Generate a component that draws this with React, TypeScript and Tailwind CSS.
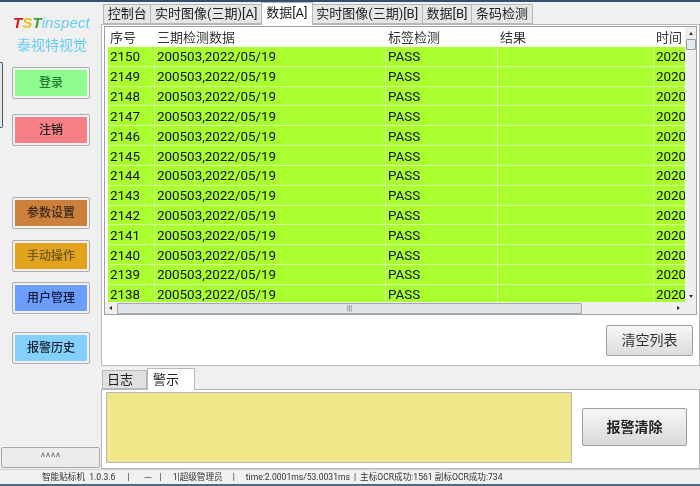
import React from 'react';

const ROWS = [2150, 2149, 2148, 2147, 2146, 2145, 2144, 2143, 2142, 2141, 2140, 2139, 2138];
const TOP_TABS = ['控制台', '实时图像(三期)[A]', '数据[A]', '实时图像(三期)[B]', '数据[B]', '条码检测'];

const FONT = "font-['Roboto','Noto_Sans_CJK_SC',sans-serif]";

function SideButton({ label, bg, text, className }: { label: string; bg: string; text: string; className: string }) {
  return (
    <button className={`h-[32px] w-[78px] ml-[12px] rounded-[2px] border border-[#a9b0b8] p-[2px] bg-[#f0f0f0] ${className}`}>
      <span className={`flex h-full w-full items-center justify-center pb-[1px] text-[12px] font-medium ${bg} ${text}`}>{label}</span>
    </button>
  );
}

function Sidebar() {
  return (
    <div className="relative flex w-[101px] shrink-0 flex-col bg-[#f0f0f0]">
      <div className="absolute left-0 top-[60px] h-[66px] w-[3px] rounded-r-[2px] border-y border-r border-[#555] bg-[#dfe6ee]" />
      <div className="mt-[12px] h-[18px] pl-[13px] text-[15px] leading-[18px] italic font-['Liberation_Sans',sans-serif] tracking-[0.1px]">
        <span className="font-bold text-[#d01818]">T</span>
        <span className="font-bold text-[#e8c020]">S</span>
        <span className="font-bold text-[#3aa040]">T</span>
        <span className="text-[#66ccf5]">inspect</span>
      </div>
      <div className="mt-[4px] pl-[17px] text-[14px] leading-[18px] text-[#66ccf5]">泰视特视觉</div>
      <SideButton label="登录" bg="bg-[#8ffb8f]" text="text-[#1f7a2a]" className="mt-[13px]" />
      <SideButton label="注销" bg="bg-[#f77f86]" text="text-[#222]" className="mt-[15px]" />
      <SideButton label="参数设置" bg="bg-[#cd7f3c]" text="text-[#3a2a1a]" className="mt-[51px]" />
      <SideButton label="手动操作" bg="bg-[#e2a41c]" text="text-[#6e5418]" className="mt-[11px]" />
      <SideButton label="用户管理" bg="bg-[#6b9eff]" text="text-[#111a33]" className="mt-[10px]" />
      <SideButton label="报警历史" bg="bg-[#84d0fd]" text="text-[#1a2230]" className="mt-[18px]" />
      <div className="mt-auto mb-[1px] ml-[1px] flex h-[21px] w-[99px] items-center justify-center rounded-[2px] border border-[#a8a8a8] bg-[#ececec] text-[12px] text-[#777]">
        ^^^^
      </div>
    </div>
  );
}

function TopTabs() {
  return (
    <div className="flex h-[20px] items-end pl-[3px] text-[13px] text-[#222]">
      {TOP_TABS.map((t, i) =>
        i === 2 ? (
          <div key={t} className="relative z-10 -mb-px -ml-px flex h-[23px] items-center border border-b-0 border-[#b8b8b8] bg-white px-[4px] pb-[2px]">
            {t}
          </div>
        ) : (
          <div key={t} className="-ml-px flex h-[20px] items-center border border-[#b8b8b8] bg-[#e6e6e6] px-[3.7px]">
            {t}
          </div>
        ),
      )}
    </div>
  );
}

function DataTable() {
  return (
    <div className="mx-[2px] mt-[1px] flex h-[289px] flex-col overflow-hidden border border-[#a0a0a0] bg-white">
      <div className="flex min-h-0 flex-1">
        <div className="min-w-0 flex-1 overflow-hidden pl-[3px]">
          <div className="flex h-[20px] items-center pt-[1px] text-[13px] text-[#333]">
            <span className="w-[47px] pl-[2px]">序号</span>
            <span className="w-[231px] pl-[2px]">三期检测数据</span>
            <span className="w-[112px] pl-[2px]">标签检测</span>
            <span className="w-[156px] pl-[2px]">结果</span>
            <span className="pl-[2px]">时间</span>
          </div>
          {ROWS.map(id => (
            <div key={id} className="flex h-[19.83px] items-center border-b border-[#d8f79a] bg-[#aaff2e] pt-[2px] text-[13.4px] text-[#111]">
              <span className="-mt-[2px] flex h-[19px] w-[47px] shrink-0 items-center border-r border-[#d8f79a] pl-[2px] pt-[2px]">{id}</span>
              <span className="-mt-[2px] flex h-[19px] w-[231px] shrink-0 items-center border-r border-[#d8f79a] pl-[2px] pt-[2px]">200503,2022/05/19</span>
              <span className="-mt-[2px] flex h-[19px] w-[112px] shrink-0 items-center border-r border-[#d8f79a] pl-[2px] pt-[2px]">PASS</span>
              <span className="-mt-[2px] flex h-[19px] w-[156px] shrink-0 items-center border-r border-[#d8f79a] pl-[2px] pt-[2px]">&nbsp;</span>
              <span className="-mt-[2px] flex h-[19px] shrink-0 items-center pl-[2px] pt-[2px]">2020</span>
            </div>
          ))}
        </div>
        <div className="flex w-[11px] shrink-0 flex-col items-center bg-[#efefef]">
          <span className="mt-[5px] h-0 w-0 border-x-[2px] border-b-[3px] border-x-transparent border-b-[#333]" />
          <span className="mt-[4px] h-[11px] w-[10px] rounded-[1px] border border-[#9a9a9a] bg-[#e4eaf0]" />
          <span className="mb-[4px] mt-auto h-0 w-0 border-x-[2px] border-t-[3px] border-x-transparent border-t-[#333]" />
        </div>
      </div>
      <div className="flex h-[12px] shrink-0 items-center bg-[#efefef] pl-[4px]">
        <span className="h-0 w-0 border-y-[2px] border-r-[3px] border-y-transparent border-r-[#333]" />
        <span className="ml-[5px] flex h-[11px] w-[465px] items-center justify-center rounded-[1px] border border-[#a8a8a8] bg-[#dfe4e9] text-[7px] leading-none text-[#666]">
          |||
        </span>
        <span className="ml-auto mr-[5px] h-0 w-0 border-y-[2px] border-l-[3px] border-y-transparent border-l-[#333]" />
        <span className="w-[11px]" />
      </div>
    </div>
  );
}

function BottomPanel() {
  return (
    <>
      <div className="mt-[2px] flex h-[21px] items-end pl-[1px] text-[13px] text-[#222]">
        <div className="flex h-[19px] w-[45px] items-center border border-[#b8b8b8] bg-[#e0e0e0] pl-[4px]">日志</div>
        <div className="relative z-10 -mb-px flex h-[22px] w-[48px] items-center border border-b-0 border-[#b8b8b8] bg-white pl-[5px]">警示</div>
      </div>
      <div className="flex h-[80px] items-start border border-[#b8b8b8] bg-white">
        <div className="ml-[4px] mt-[2px] h-[71px] w-[466px] border border-[#b4b8c0] bg-[#efe788]" />
        <button className="ml-[10px] mt-[18px] h-[38px] w-[105px] rounded-[2px] border border-[#9aa0a6] bg-gradient-to-b from-[#f6f6f6] to-[#d8dadc] text-[14px] font-bold text-[#222]">
          报警清除
        </button>
      </div>
    </>
  );
}

export default function App() {
  return (
    <div className={`flex h-[486px] w-[700px] flex-col overflow-hidden bg-[#f0f0f0] ${FONT} blur-[0.35px]`}>
      <div className="h-[2px] shrink-0 bg-[#33506e]" />
      <div className="flex min-h-0 flex-1">
        <Sidebar />
        <div className="flex min-w-0 flex-1 flex-col">
          <div className="h-[2px]" />
          <TopTabs />
          <div className="h-[342px] w-[599px] border border-[#b8b8b8] bg-white">
            <DataTable />
            <div className="mt-[10px] flex justify-end pr-[6px]">
              <button className="h-[31px] w-[87px] rounded-[2px] border border-[#a0a0a0] bg-gradient-to-b from-[#f6f6f6] to-[#dcdcdc] text-[14px] text-[#333]">
                清空列表
              </button>
            </div>
          </div>
          <BottomPanel />
        </div>
      </div>
      <div className="flex h-[15px] shrink-0 items-center whitespace-pre border-t border-[#d0d0d0] bg-[#f0f0f0] pl-[42px] text-[8.6px] text-[#333]">
        <span>智能贴标机  1.0.3.6</span>
        <span className="ml-[12px]">|</span>
        <span className="ml-[15px]">---</span>
        <span className="ml-[8px]">|</span>
        <span className="ml-[11px]">1|超级管理员</span>
        <span className="ml-[10px]">|</span>
        <span className="ml-[11px]">time:2.0001ms/53.0031ms</span>
        <span className="ml-[4px]">|</span>
        <span className="ml-[4px]">主标OCR成功:1561 副标OCR成功:734</span>
      </div>
      <div className="h-[2px] shrink-0 bg-[#4a6a88]" />
    </div>
  );
}
